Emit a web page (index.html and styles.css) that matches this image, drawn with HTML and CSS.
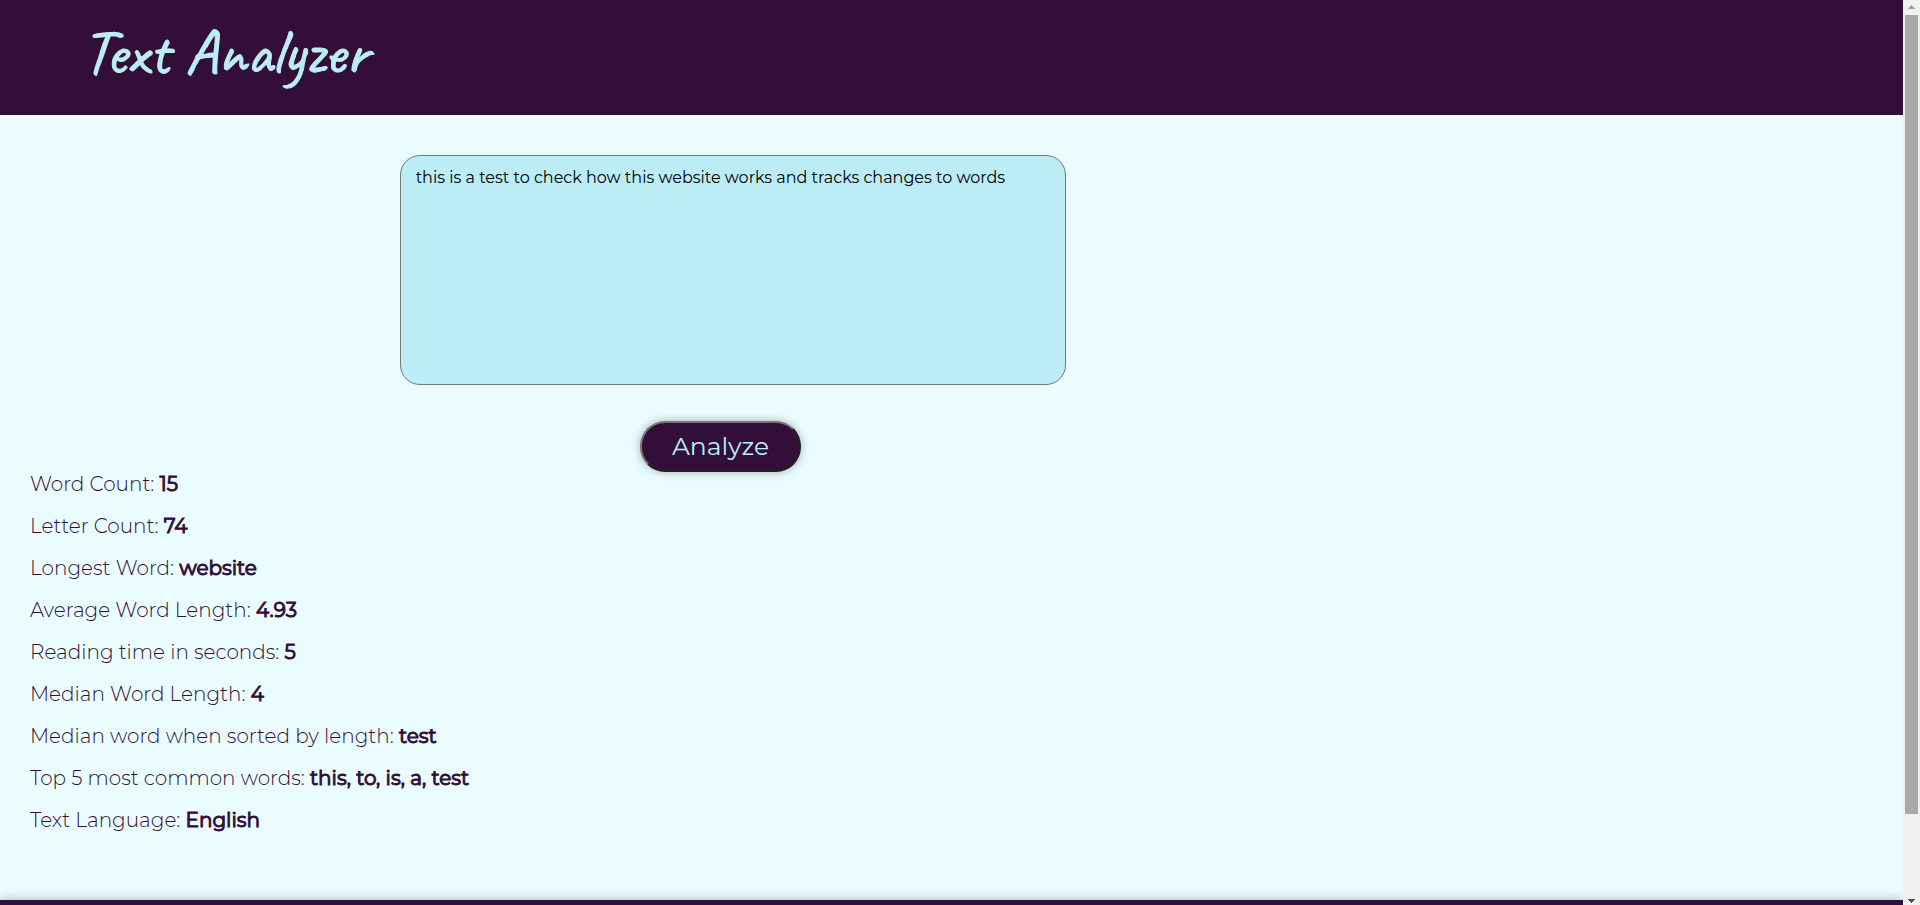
FILE: index.html
```html
<!DOCTYPE html>
<html lang="en">
<head>
<meta charset="utf-8">
<title>Text Analyzer</title>
<link rel="stylesheet" href="styles.css">
</head>
<body>
<div class="page">
  <header class="header"><h1 class="title">Text Analyzer</h1></header>
  <main class="main">
    <form class="form">
      <textarea class="input" aria-label="Text to analyze" spellcheck="false">this is a test to check how this website works and tracks changes to words</textarea>
      <button class="analyze" type="button">Analyze</button>
    </form>
    <section class="results">
      <p class="result">Word Count: <strong>15</strong></p>
      <p class="result">Letter Count: <strong>74</strong></p>
      <p class="result">Longest Word: <strong>website</strong></p>
      <p class="result">Average Word Length: <strong>4.93</strong></p>
      <p class="result">Reading time in seconds: <strong>5</strong></p>
      <p class="result">Median Word Length: <strong>4</strong></p>
      <p class="result">Median word when sorted by length: <strong>test</strong></p>
      <p class="result">Top 5 most common words: <strong>this, to, is, a, test</strong></p>
      <p class="result">Text Language: <strong>English</strong></p>
    </section>
  </main>
  <footer class="footer"></footer>
</div>
<div class="scrollbar" aria-hidden="true">
  <svg class="arrow arrow-up" viewBox="0 0 7 4"><path d="M3 0h1v1h1v1h1v1h1v1H0V3h1V2h1V1h1z"/></svg>
  <div class="track"><div class="thumb"></div></div>
  <svg class="arrow arrow-down" viewBox="0 0 7 4"><path d="M0 0h7v1H6v1H5v1H4v1H3V3H2V2H1V1H0z"/></svg>
</div>
</body>
</html>
```

FILE: styles.css
```css
* {
  box-sizing: border-box;
}

body {
  display: flex;
  height: 100vh;
  margin: 0;
  overflow: hidden;
  background: #ebfcff;
  color: #320e38;
  font-family: Montserrat, Inter, sans-serif;
}

.page {
  flex: 1;
  min-width: 0;
  overflow: hidden;
}

.header {
  padding: 20px 82px 31px;
  background: #320e38;
}

.title {
  margin: 0;
  color: #bcedf7;
  font-family: Caveat, Lato, sans-serif;
  font-size: 64px;
  font-weight: 500;
  line-height: 64px;
  -webkit-text-stroke: 1px #bcedf7;
}

.form {
  display: flex;
  flex-direction: column;
  align-items: flex-start;
  gap: 36px;
  padding-top: 40px;
}

.input {
  width: 35%;
  height: 230px;
  margin-left: 21%;
  padding: 12px 15px;
  border: 1px solid #767676;
  border-radius: 20px;
  background: #bcedf7;
  color: #000;
  font-family: inherit;
  font-size: 16px;
  font-weight: 400;
  line-height: 20px;
  resize: none;
}

.analyze {
  min-width: 161px;
  height: 51px;
  margin-left: 640px;
  padding: 0 28px 2px;
  border: 2px solid;
  border-color: #767676 #212121 #212121 #767676;
  border-radius: 25px;
  background: #320e38;
  box-shadow: 0 0 10px #a3b0b0;
  color: #bcedf7;
  font-family: inherit;
  font-size: 25px;
  font-weight: 400;
}

.results {
  display: flex;
  flex-direction: column;
  gap: 20px;
  padding: 1px 30px 69px;
}

.result {
  margin: 0;
  font-size: 20px;
  font-weight: 300;
  line-height: 22px;
}

.result strong {
  font-weight: 400;
  -webkit-text-stroke: 1px #320e38;
}

.footer {
  height: 160px;
  background: #320e38;
  box-shadow: 0 0 10px #a3b0b0;
}

.scrollbar {
  display: flex;
  flex-direction: column;
  align-items: center;
  width: 17px;
  padding: 5px 0 2px;
  background: #f0f0f0;
}

.arrow {
  width: 7px;
  height: 4px;
  fill: #505050;
}

.arrow-up {
  fill: #a3a3a3;
}

.track {
  flex: 1;
  width: 13px;
  margin: 6px 0;
}

.thumb {
  height: 91%;
  background: #a8a8a8;
}
```
